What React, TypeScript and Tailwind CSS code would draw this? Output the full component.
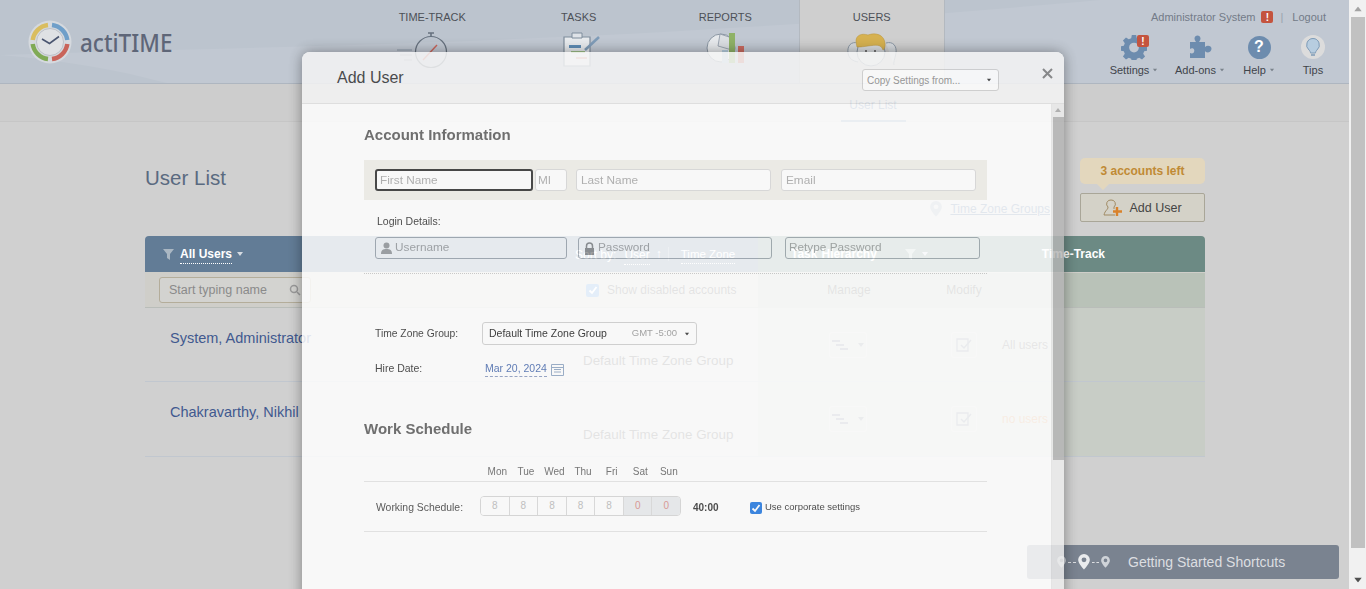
import React from "react";

function Logo() {
  return (
    <svg width="44" height="44" viewBox="0 0 44 44">
      <circle cx="22" cy="22" r="21.5" fill="#d5d9de" />
      <path d="M24 5 A17.5 17.5 0 0 1 39.3 20" fill="none" stroke="#6f9fc9" strokeWidth="4.5" />
      <path d="M39.3 24 A17.5 17.5 0 0 1 24 39" fill="none" stroke="#c9645a" strokeWidth="4.5" />
      <path d="M20 39 A17.5 17.5 0 0 1 4.7 24" fill="none" stroke="#80aa55" strokeWidth="4.5" />
      <path d="M4.7 20 A17.5 17.5 0 0 1 20 5" fill="none" stroke="#d9bd5f" strokeWidth="4.5" />
      <circle cx="22" cy="22" r="13.5" fill="#dfe1e4" stroke="#b5b9c0" strokeWidth="0.8" />
      <path d="M14 19 L21.5 23.5 L31 16.5" fill="none" stroke="#4a5570" strokeWidth="1.6" />
    </svg>
  );
}

function Stopwatch() {
  return (
    <svg width="54" height="40" viewBox="0 0 54 40" className="-ml-[17px]">
      <path d="M0 18 H15 M3 23 H15 M7 28 H15" stroke="#8b98a6" strokeWidth="1" fill="none" />
      <circle cx="34" cy="20" r="15.5" fill="none" stroke="#67727f" strokeWidth="1.2" />
      <path d="M31 1 H37 M34 1 V5" stroke="#67727f" strokeWidth="1.6" />
      <path d="M26 28 L40 13" stroke="#c9645a" strokeWidth="1.4" />
    </svg>
  );
}

function Clipboard() {
  return (
    <svg width="38" height="36" viewBox="0 0 38 36" className="ml-[6px]">
      <path d="M1 5 H27 V34 H1 Z" fill="#e8ebee" stroke="#7f8d9c" strokeWidth="1.2" />
      <path d="M9 1 H19 V6 H9 Z" fill="#dfe3e8" stroke="#7f8d9c" strokeWidth="1" />
      <path d="M6 13 H18 V16 H6 Z" fill="#5f8db5" />
      <path d="M8 19 H22 V21 H8 Z" fill="#9fc08a" />
      <path d="M13 25 H24 V27 H13 Z" fill="#dd9d96" />
      <path d="M22 18 L36 5" stroke="#7f9cb8" strokeWidth="2.6" />
    </svg>
  );
}

function ReportIcon() {
  return (
    <svg width="40" height="32" viewBox="0 0 40 32" className="ml-[2px]">
      <circle cx="15" cy="16" r="14" fill="#e6e9ec" stroke="#8a96a3" strokeWidth="1" />
      <path d="M14 2 L12 14 L26 18 L26 6 Z" fill="#dcdfe3" stroke="#8a96a3" strokeWidth="0.8" />
      <path d="M16 18 H22 V31 H16 Z" fill="#b6cfe0" />
      <path d="M23 1 H29 V31 H23 Z" fill="#8fb267" />
      <path d="M32 14 H38 V31 H32 Z" fill="#c96a5f" />
    </svg>
  );
}

function UsersIcon() {
  return (
    <svg width="52" height="36" viewBox="0 0 52 36">
      <path d="M12 11 C5 9 1 14 2 21 C3 27 7 29 12 30" fill="#d5d9dd" stroke="#8a96a3" strokeWidth="1" />
      <path d="M40 11 C47 9 51 14 50 21 C49 27 47 31 48 33" fill="#d5d9dd" stroke="#8a96a3" strokeWidth="1" />
      <circle cx="25" cy="20" r="14" fill="#d9dcdf" stroke="#8a96a3" strokeWidth="1" />
      <path d="M10 9 C10 3 16 1 22 3 C30 0 38 3 39 11 C39.500 15 38 18 37 18 C35 12 30 13 22 14 C16 15 13 15 11 15 C10.500 13 10 11 10 9 Z" fill="#d6b150" stroke="#b8953c" strokeWidth="0.5" />
      <circle cx="20" cy="19" r="1" fill="#555" />
      <circle cx="29" cy="19" r="1" fill="#555" />
    </svg>
  );
}

function Badge({ className }: { className: string }) {
  return (
    <span className={`flex items-center justify-center rounded-[2px] bg-[#c4543f] font-bold text-white ${className}`}>!</span>
  );
}

function Caret({ className = "text-[#7f8791]" }: { className?: string }) {
  return (
    <svg width="6" height="4" viewBox="0 0 6 4" className={className}>
      <path d="M0 0 H6 L3 4 Z" fill="currentColor" />
    </svg>
  );
}

function Gear() {
  return (
    <svg width="26" height="26" viewBox="0 0 24 24">
      <path
        fill="#6d8cae"
        fillRule="evenodd"
        d="M10 1h4l.6 3 2.2.9 2.6-1.7 2.8 2.8-1.7 2.6.9 2.2 3 .6v4l-3 .6-.9 2.2 1.7 2.6-2.8 2.8-2.6-1.7-2.2.9-.6 3h-4l-.6-3-2.2-.9-2.6 1.7-2.8-2.8 1.7-2.6-.9-2.2-3-.6v-4l3-.6.9-2.2-1.7-2.6 2.8-2.8 2.6 1.7 2.2-.9zM12 8a4.5 4.5 0 1 0 0 9 4.5 4.5 0 0 0 0-9z"
      />
    </svg>
  );
}

function Puzzle() {
  return (
    <svg width="24" height="24" viewBox="0 0 24 24">
      <path
        fill="#6d8cae"
        d="M2 7h6C7 5.500 6.500 4.500 6.500 3.500 6.500 1.500 8 .5 9.500.5S12.500 1.500 12.500 3.500C12.500 4.500 12 5.500 11 7h6v5c1-.8 2-1.200 3-1.200 2 0 3.500 1.300 3.500 3S22 17.500 20 17.500c-1 0-2-.4-3-1.200V23H2v-5c1.500.7 3 .5 3.800-.6.900-1.200.6-3-.6-3.800C4.300 13 3 13.200 2 14z"
      />
    </svg>
  );
}

function Bulb() {
  return (
    <svg width="24" height="24" viewBox="0 0 24 24">
      <circle cx="12" cy="12" r="12" fill="#dcdcdc" />
      <path d="M12 3.500a6.500 6.500 0 0 0-4 11.500c1 1 1.500 2 1.500 3h5c0-1 .5-2 1.500-3A6.500 6.500 0 0 0 12 3.500z" fill="#b7cde0" stroke="#7e9bb7" strokeWidth="1" />
      <path d="M10 20h4" stroke="#7e9bb7" strokeWidth="1.500" />
    </svg>
  );
}

function Pin({ size, color }: { size: number; color: string }) {
  return (
    <svg width={size} height={size * 1.3} viewBox="0 0 12 16">
      <path fillRule="evenodd" fill={color} d="M6 0a6 6 0 0 0-6 6c0 4 6 10 6 10s6-6 6-10a6 6 0 0 0-6-6zm0 3.500a2.500 2.500 0 1 1 0 5 2.500 2.500 0 0 1 0-5z" />
    </svg>
  );
}

function HierarchyCell() {
  return (
    <div className="-ml-[2px] flex h-[26px] w-[38px] items-center justify-center gap-[10px] rounded-[3px] border border-[#d5d5d5]">
      <svg width="16" height="12" viewBox="0 0 16 12">
        <path d="M0 1h8v2H0zM4 5h8v2H4zM8 9h8v2H8z" fill="#7a8694" />
      </svg>
      <Caret />
    </div>
  );
}

function ModifyCell() {
  return (
    <div className="flex h-[26px] w-[26px] items-center justify-center rounded-[3px] border border-[#d5d5d5]">
      <svg width="16" height="16" viewBox="0 0 16 16">
        <path d="M1 2h11v12H1z" fill="none" stroke="#7a8694" strokeWidth="1.300" />
        <path d="M5 8l3 3 7-8" fill="none" stroke="#7a8694" strokeWidth="1.500" />
      </svg>
    </div>
  );
}

function Row({ name, scope, scopeClass, h }: { name: string; scope: string; scopeClass: string; h: string }) {
  return (
    <div className={`grid grid-cols-[438px_175px_182px_48px_1fr] border-b border-[#c1c7cf] ${h}`}>
      <div className="pl-[25px] pt-[20px] text-[14.500px] text-[#41598f]">{name}</div>
      <div className="pt-[43px] text-[13.400px] text-[#555]">Default Time Zone Group</div>
      <div className="flex justify-center bg-[#c8cdc6] pt-[24px]">
        <HierarchyCell />
      </div>
      <div className="flex justify-center bg-[#c8cdc6] pt-[24px]">
        <ModifyCell />
      </div>
      <div className={`bg-[#c8cdc6] pl-[14px] pt-[28px] text-[12px] ${scopeClass}`}>{scope}</div>
    </div>
  );
}

function NavItem({ label, active, children }: { label: string; active?: boolean; children: React.ReactNode }) {
  return (
    <div className={`flex h-[83px] w-[146.500px] flex-col items-center pt-[11px] ${active ? "border-x border-[#b3b9c0] bg-[#cfcfcf]" : ""}`}>
      <span className="text-[11px] leading-[13px] text-[#4c5057]">{label}</span>
      <div className="mt-[8px] flex h-[40px] items-start">{children}</div>
    </div>
  );
}

function Tool({ label, caret, w, children }: { label: string; caret?: boolean; w: string; children: React.ReactNode }) {
  return (
    <div className={`flex flex-col items-center ${w}`}>
      <div className="relative flex h-[28px] items-center">{children}</div>
      <div className="mt-[2px] flex items-center gap-[3px] text-[11px] leading-[14px] text-[#3f444b]">
        {label}
        {caret && <Caret className="scale-75 text-[#7b838c]" />}
      </div>
    </div>
  );
}

function Field({ w, placeholder, className = "", icon }: { w: string; placeholder: string; className?: string; icon?: React.ReactNode }) {
  return (
    <div className={`flex h-[22px] items-center gap-[3px] whitespace-nowrap rounded-[3px] border bg-white text-[11.800px] text-[#a9a9a9] ${w} ${className}`}>
      {icon}
      {placeholder}
    </div>
  );
}

function PersonGlyph() {
  return (
    <svg width="11" height="12" viewBox="0 0 11 12">
      <circle cx="5.500" cy="3.500" r="3" fill="#a5a5a5" />
      <path d="M0 12c0-4 2-5 5.500-5S11 8 11 12z" fill="#a5a5a5" />
    </svg>
  );
}

function LockGlyph() {
  return (
    <svg width="11" height="13" viewBox="0 0 11 13">
      <path d="M2.500 6V4a3 3 0 0 1 6 0v2" fill="none" stroke="#8f8f8f" strokeWidth="1.500" />
      <path d="M1 6h9v7H1z" fill="#8f8f8f" />
    </svg>
  );
}

const days = ["Mon", "Tue", "Wed", "Thu", "Fri", "Sat", "Sun"];
const hours = ["8", "8", "8", "8", "8", "0", "0"];

function Modal() {
  return (
    <div className="absolute left-[302px] top-[52px] flex h-[560px] w-[762px] flex-col rounded-t-[8px] bg-white opacity-[0.84] shadow-[0_0_14px_rgba(0,0,0,0.45)]">
      <div className="flex h-[52px] items-start rounded-t-[8px] border-b border-[#e2e2e2] bg-[#f5f5f5] pl-[35px]">
        <span className="mt-[16px] w-[525px] whitespace-nowrap text-[16px] leading-[20px] text-[#333]">Add User</span>
        <div className="mt-[17px] flex h-[22px] w-[137px] items-center justify-between whitespace-nowrap rounded-[3px] border border-[#cfcfcf] bg-white pl-[4px] pr-[6px] text-[10px] text-[#8d8d8d]">
          Copy Settings from...
          <Caret className="scale-75 text-[#333]" />
        </div>
        <svg width="11" height="11" viewBox="0 0 11 11" className="ml-[43px] mt-[16px]">
          <path d="M1 1 L10 10 M10 1 L1 10" stroke="#7d7d7d" strokeWidth="2" />
        </svg>
      </div>
      <div className="flex flex-1">
        <div className="flex-1 pl-[62px]">
          <div className="mt-[21px] h-5 text-[15px] font-bold leading-5 text-[#5c5c5c]">Account Information</div>
          <div className="mt-[15px] flex h-10 w-[623px] items-center bg-[#f0efe9] px-[11px]">
            <Field w="w-[158px]" placeholder="First Name" className="border-2 border-[#2e2e2e] pl-[3px] pt-[2px]" />
            <Field w="w-[32px]" placeholder="MI" className="ml-[2px] border-[#d8d8d8] pl-[2px] pt-[2px]" />
            <Field w="w-[195px]" placeholder="Last Name" className="ml-[9px] border-[#d8d8d8] pl-[4px] pt-[2px]" />
            <Field w="w-[195px]" placeholder="Email" className="ml-[10px] border-[#d8d8d8] pl-[4px] pt-[2px]" />
          </div>
          <div className="ml-[13px] mt-[14px] h-[14px] text-[10.500px] leading-[14px] text-[#333]">Login Details:</div>
          <div className="ml-[11px] mt-[9px] flex">
            <Field w="w-[192px]" placeholder="Username" className="border-[#aab0b6] pl-[5px]" icon={<PersonGlyph />} />
            <Field w="w-[194px]" placeholder="Password" className="ml-[11px] border-[#aab0b6] pl-[5px] text-[#999]" icon={<LockGlyph />} />
            <Field w="w-[195px]" placeholder="Retype Password" className="ml-[13px] border-[#aab0b6] pl-[3px] text-[#888]" />
          </div>
          <div className="mt-[14px] w-[623px] border-b border-dotted border-[#c9c9c9]" />
          <div className="ml-[11px] mt-[48px] flex h-[23px] items-center text-[10.500px] text-[#333]">
            <span className="w-[107px] text-[10.300px]">Time Zone Group:</span>
            <div className="flex h-[23px] w-[215px] items-center rounded-[3px] border border-[#cfcfcf] bg-white pl-[6px] pr-[6px]">
              <span className="text-[#222]">Default Time Zone Group</span>
              <span className="ml-auto mr-[7px] text-[9.500px] text-[#999]">GMT -5:00</span>
              <Caret className="scale-75 text-[#333]" />
            </div>
          </div>
          <div className="ml-[11px] mt-[14px] flex h-5 items-center text-[10.500px] text-[#333]">
            <span className="w-[110px]">Hire Date:</span>
            <span className="border-b border-dashed border-[#8c9bc0] text-[#4a6cb0]">Mar 20, 2024</span>
            <svg width="13" height="13" viewBox="0 0 13 13" className="ml-[4px]">
              <path d="M.5 1.500h12v11H.5zM.5 4.500h12M3 6.500h7M3 9h7" fill="none" stroke="#8fa6c4" />
            </svg>
          </div>
          <div className="mt-[40px] h-5 text-[15px] font-bold leading-5 text-[#5c5c5c]">Work Schedule</div>
          <div className="mt-[24px] w-[623px] border-b border-[#e4e4e4] pb-[2px]">
            <div className="flex h-4 items-center pl-[119px] text-[10px] text-[#666]">
              {days.map((d) => (
                <span key={d} className="w-[28.600px] text-center">{d}</span>
              ))}
            </div>
          </div>
          <div className="flex h-[50px] w-[623px] items-center border-b border-[#e4e4e4] pl-[12px]">
            <span className="mt-[2px] w-[104px] text-[10.400px] text-[#444]">Working Schedule:</span>
            <div className="-mt-[2px] flex h-[20px] w-[201px] overflow-hidden rounded-[4px] border border-[#d6d6d6]">
              {hours.map((v, i) => (
                <span
                  key={i}
                  className={`flex flex-1 items-center justify-center border-r border-[#d9d9d9] text-[10px] last:border-r-0 ${
                    i > 4 ? "bg-[#e9ebed] text-[#d98f8a]" : "bg-white text-[#bbb]"
                  }`}
                >
                  {v}
                </span>
              ))}
            </div>
            <span className="ml-[12px] mt-[2px] w-[57px] text-[10px] font-bold text-[#333]">40:00</span>
            <span className="mt-[2px] flex h-[12px] w-[12px] items-center justify-center rounded-[2px] bg-[#1f76e0]">
              <svg width="10" height="10" viewBox="0 0 10 10">
                <path d="M1.500 5.500L4 8l4.500-6" fill="none" stroke="#fff" strokeWidth="1.800" />
              </svg>
            </span>
            <span className="ml-[3px] mt-[2px] text-[9.500px] text-[#333]">Use corporate settings</span>
          </div>
        </div>
        <div className="flex w-[13px] flex-col items-center border-l border-[#e8e8e8] bg-[#ececec]">
          <Caret className="mt-[4px] rotate-180 text-[#aaa]" />
          <div className="mt-[5px] h-[343px] w-[11px] bg-[#b4b4b4]" />
        </div>
      </div>
    </div>
  );
}

export default function App() {
  return (
    <div className="relative flex h-[589px] w-[1366px] overflow-hidden bg-[#d0d0d0] font-['Liberation_Sans',Arial,sans-serif]">
      <div className="w-[1349px]">
        <header className="relative flex h-[84px] items-start overflow-hidden border-b border-[#aeb6c0] bg-[#bcc4ce]">
          <svg width="1349" height="84" viewBox="0 0 1349 84" className="absolute left-0 top-0">
            <path d="M0 55 C300 45 600 45 1100 0 L1349 0 L1349 84 L170 84 C120 70 60 60 0 55 Z" fill="#c1c8d2" />
          </svg>
          <div className="relative ml-[28px] mt-[20px]">
            <Logo />
          </div>
          <span className="relative ml-[8px] mt-[24px] origin-left scale-x-90 font-['Noto_Sans',sans-serif] text-[25px] font-medium leading-[36px] text-[#5e6678]">actiTIME</span>
          <nav className="absolute left-[359px] top-0 flex">
            <NavItem label="TIME-TRACK"><Stopwatch /></NavItem>
            <NavItem label="TASKS"><Clipboard /></NavItem>
            <NavItem label="REPORTS"><ReportIcon /></NavItem>
            <NavItem label="USERS" active><UsersIcon /></NavItem>
          </nav>
          <div className="absolute right-[23px] top-[10px] flex flex-col items-end">
            <div className="flex h-[14px] items-center text-[11px] text-[#737b88]">
              <span>Administrator System</span>
              <Badge className="ml-[6px] h-[12px] w-[12px] text-[10px]" />
              <span className="ml-[7px] mr-[9px] text-[#9aa2ad]">|</span>
              <span>Logout</span>
            </div>
          </div>
          <div className="absolute left-[1101px] top-[33px] flex items-start">
            <Tool label="Settings" caret w="w-[66px]">
              <Gear />
              <Badge className="absolute right-[-2px] top-[2px] h-[12px] w-[12px] text-[10px]" />
            </Tool>
            <Tool label="Add-ons" caret w="w-[66px]"><Puzzle /></Tool>
            <Tool label="Help" caret w="w-[52px]">
              <span className="flex h-[23px] w-[23px] items-center justify-center rounded-full bg-[#6d8cae] text-[16px] font-bold text-white">?</span>
            </Tool>
            <Tool label="Tips" w="w-[56px]"><Bulb /></Tool>
          </div>
        </header>

        <div className="flex h-[38px] justify-center border-b border-[#c6c6c6] bg-[#cdcdcd] pl-[397px]">
          <div className="flex h-[38px] w-[65px] items-center justify-center border-b-2 border-[#7a95b0] pt-[5px] text-[12px] text-[#4a6a92]">User List</div>
        </div>

        <div className="pl-[145px] pr-[144px]">
          <div className="relative flex h-[114px] items-start justify-between">
            <h1 className="mt-[42px] text-[20.500px] font-normal leading-[28px] text-[#5a6a80]">User List</h1>
            <div className="flex items-start">
              <div className="mt-[78px] flex items-center gap-[8px] pr-[30px] text-[12px] text-[#4a6a92]">
                <Pin size={12} color="#9aa6b4" />
                <span className="underline">Time Zone Groups</span>
              </div>
              <div className="mt-[36px] flex w-[125px] flex-col">
                <div className="relative flex h-[26px] items-center justify-center rounded-[5px] bg-[#e3d7bd] text-[12px] font-bold text-[#c08a35]">
                  3 accounts left
                  <span className="absolute left-[17px] top-[26px] border-x-[6px] border-t-[6px] border-x-transparent border-t-[#e3d7bd]" />
                </div>
                <div className="mt-[9px] flex h-[29px] items-center justify-center gap-[6px] rounded-[2px] border border-[#a9a698] bg-[#d4d2c8] pt-[1px] text-[12.500px] text-[#444]">
                  <svg width="20" height="20" viewBox="0 0 20 20">
                    <path d="M8 2a4 4 0 0 0-3 7c0 3-3 3-4 8h11" fill="none" stroke="#a08a63" strokeWidth="1" />
                    <path d="M8 2a4 4 0 0 1 3 7v2" fill="none" stroke="#a08a63" strokeWidth="1" />
                    <path d="M14 9v9M10 13.500h9" stroke="#d9822b" strokeWidth="2.400" />
                  </svg>
                  Add User
                </div>
              </div>
            </div>
          </div>

          <div className="w-[1060px]">
            <div className="flex h-[36px] overflow-hidden rounded-t-[4px] text-white">
              <div className="flex w-[613px] items-center whitespace-nowrap bg-[#627c96] pl-[18px] text-[12px]">
                <svg width="11" height="11" viewBox="0 0 11 11">
                  <path d="M0 0h11L7 5v6L4 9V5z" fill="#aab7c3" />
                </svg>
                <span className="ml-[6px] border-b border-dotted border-white font-bold">All Users</span>
                <Caret className="ml-[5px] text-[#d5dbe2]" />
                <span className="ml-[332px] pt-[2px]">Sort by:</span>
                <span className="ml-[8px] border-b border-dotted border-white pt-[2px]">User</span>
                <span className="ml-[6px]">↑</span>
                <span className="ml-[6px] h-[14px] border-l border-[#8da0b4]" />
                <span className="ml-[12px] border-b border-dotted border-white pt-[2px] text-[11.500px]">Time Zone</span>
              </div>
              <div className="flex flex-1 items-center whitespace-nowrap bg-[#6c8a84] text-[12px] font-bold">
                <span className="ml-[33px]">Task</span>
                <span className="ml-[4px]">Hierarchy</span>
                <svg width="11" height="11" viewBox="0 0 11 11" className="ml-[28px]">
                  <path d="M0 0h11L7 5v6L4 9V5z" fill="#b5c4c0" />
                </svg>
                <Caret className="ml-[6px] text-[#d5dbe2]" />
                <span className="ml-[114px]">Time-Track</span>
              </div>
            </div>
            <div className="grid h-[36px] grid-cols-[438px_175px_182px_48px_1fr] items-stretch border-b border-[#b9bdb9] bg-[#cfcec9] pt-[1px] text-[12px]">
              <div className="flex items-center pl-[14px]">
                <div className="flex h-[26px] w-[152px] items-center justify-between rounded-[3px] border border-[#b4ad9a] bg-[#d3d3d0] px-[9px] text-[12.500px] text-[#8a8a8a]">
                  Start typing name
                  <svg width="12" height="12" viewBox="0 0 12 12">
                    <circle cx="5" cy="5" r="3.500" fill="none" stroke="#9a9a9a" strokeWidth="1.500" />
                    <path d="M8 8l3 3" stroke="#9a9a9a" strokeWidth="1.500" />
                  </svg>
                </div>
              </div>
              <div className="flex items-center pl-[3px] text-[#555]">
                <span className="flex h-[13px] w-[13px] items-center justify-center rounded-[2px] bg-[#5b97d8]">
                  <svg width="10" height="10" viewBox="0 0 10 10">
                    <path d="M1.500 5.500L4 8l4.500-6" fill="none" stroke="#fff" strokeWidth="1.800" />
                  </svg>
                </span>
                <span className="ml-[8px]">Show disabled accounts</span>
              </div>
              <div className="flex items-center justify-center bg-[#b9c2b8] text-[#555]">Manage</div>
              <div className="flex items-center justify-center bg-[#b9c2b8] text-[#555]">Modify</div>
              <div className="bg-[#b9c2b8]" />
            </div>
            <Row name="System, Administrator" scope="All users" scopeClass="text-[#666]" h="h-[74px]" />
            <Row name="Chakravarthy, Nikhil" scope="no users" scopeClass="text-[#d08a50]" h="h-[75px]" />
          </div>
        </div>
      </div>

      <div className="flex h-[589px] w-[17px] flex-col items-center bg-[#f1f1f1]">
        <Caret className="mt-[7px] rotate-180 scale-[1.300] text-[#a3a3a3]" />
        <div className="mt-[6px] h-[531px] w-[14px] flex-none bg-[#c1c1c1]" />
        <div className="flex-1" />
        <Caret className="mb-[7px] scale-[1.300] text-[#505050]" />
      </div>

      <div className="absolute left-[1027px] top-[545px] flex h-[34px] w-[312px] items-center rounded-[3px] bg-[#7a8390] pl-[30px] text-[14px] text-[#dcdee1]">
        <Pin size={9} color="#cfd3d8" />
        <span className="mx-[2px] w-[8px] border-t border-dashed border-[#dcdee1]" />
        <Pin size={12} color="#e9ebed" />
        <span className="mx-[2px] w-[7px] border-t border-dashed border-[#dcdee1]" />
        <Pin size={9} color="#cfd3d8" />
        <span className="ml-[18px]">Getting Started Shortcuts</span>
      </div>

      <Modal />
    </div>
  );
}
